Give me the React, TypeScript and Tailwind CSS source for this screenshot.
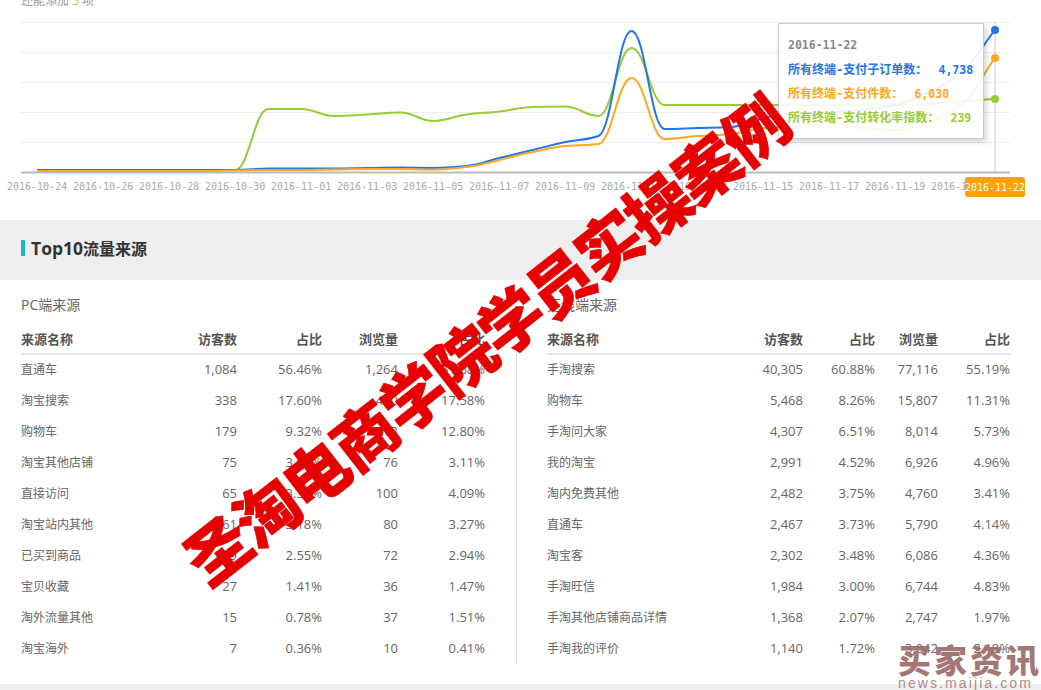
import React from "react";

type Row = [string, string, string, string, string];

const leftRows: Row[] = [
  ["直通车", "1,084", "56.46%", "1,264", "51.68%"],
  ["淘宝搜索", "338", "17.60%", "430", "17.58%"],
  ["购物车", "179", "9.32%", "313", "12.80%"],
  ["淘宝其他店铺", "75", "3.91%", "76", "3.11%"],
  ["直接访问", "65", "3.39%", "100", "4.09%"],
  ["淘宝站内其他", "61", "3.18%", "80", "3.27%"],
  ["已买到商品", "49", "2.55%", "72", "2.94%"],
  ["宝贝收藏", "27", "1.41%", "36", "1.47%"],
  ["淘外流量其他", "15", "0.78%", "37", "1.51%"],
  ["淘宝海外", "7", "0.36%", "10", "0.41%"],
];

const rightRows: Row[] = [
  ["手淘搜索", "40,305", "60.88%", "77,116", "55.19%"],
  ["购物车", "5,468", "8.26%", "15,807", "11.31%"],
  ["手淘问大家", "4,307", "6.51%", "8,014", "5.73%"],
  ["我的淘宝", "2,991", "4.52%", "6,926", "4.96%"],
  ["淘内免费其他", "2,482", "3.75%", "4,760", "3.41%"],
  ["直通车", "2,467", "3.73%", "5,790", "4.14%"],
  ["淘宝客", "2,302", "3.48%", "6,086", "4.36%"],
  ["手淘旺信", "1,984", "3.00%", "6,744", "4.83%"],
  ["手淘其他店铺商品详情", "1,368", "2.07%", "2,747", "1.97%"],
  ["手淘我的评价", "1,140", "1.72%", "3,042", "2.18%"],
];

const labels = [
  "2016-10-24", "2016-10-26", "2016-10-28", "2016-10-30", "2016-11-01", "2016-11-03", "2016-11-05", "2016-11-07",
  "2016-11-09", "2016-11-11", "2016-11-13", "2016-11-15", "2016-11-17", "2016-11-19", "2016-11-21",
];

const xs = Array.from({ length: 30 }, (_, i) => 37 + i * 33.03);

const green = [170, 170, 170, 170, 170, 170, 170, 109, 109, 116, 114.5, 112.5, 121, 114.5, 111.5, 107, 106.5, 116, 48, 105, 105, 105, 105, 105, 105, 105, 105, 104, 101, 99];
const blue = [170, 170, 170, 170, 170, 170, 170, 168.5, 168.5, 168.5, 168, 167.5, 168, 166, 158, 150, 142, 136, 31, 129, 128, 127, 118, 113, 112, 110, 105, 92, 72, 30];
const orange = [171, 171, 171, 171, 171, 171, 170.5, 170, 170, 169.5, 169, 169, 169.5, 167, 160, 152, 146, 144, 78, 139, 136, 134, 128, 126, 123, 128, 130, 122, 104, 58];

function spline(ys: number[]): string {
  const n = ys.length;
  const d: number[] = [];
  for (let i = 0; i < n - 1; i++) d.push((ys[i + 1] - ys[i]) / (xs[i + 1] - xs[i]));
  const m: number[] = [0];
  for (let i = 1; i < n - 1; i++) {
    m.push(d[i - 1] * d[i] <= 0 ? 0 : (2 * d[i - 1] * d[i]) / (d[i - 1] + d[i]));
  }
  m.push(d[n - 2]);
  let p = `M${xs[0]} ${ys[0]}`;
  for (let i = 0; i < n - 1; i++) {
    const h = (xs[i + 1] - xs[i]) / 2.4;
    p += `C${xs[i] + h} ${ys[i] + m[i] * h} ${xs[i + 1] - h} ${ys[i + 1] - m[i + 1] * h} ${xs[i + 1]} ${ys[i + 1]}`;
  }
  return p;
}

function DataTable({ title, rows, widths }: { title: string; rows: Row[]; widths: number[] }) {
  return (
    <div>
      <h3 className="text-[14px] leading-[20px] font-normal text-[#666]">{title}</h3>
      <table className="mt-[15px] table-fixed border-collapse text-[13px]" style={{ width: widths.reduce((a, b) => a + b, 0) }}>
        <colgroup>
          {widths.map((w, i) => (
            <col key={i} style={{ width: w }} />
          ))}
        </colgroup>
        <thead>
          <tr className="h-[24px] border-b-2 border-[#e5e5e5] text-[#555] align-top">
            <th className="text-left font-bold leading-[18px]">来源名称</th>
            <th className="text-right font-bold leading-[18px]">访客数</th>
            <th className="text-right font-bold leading-[18px]">占比</th>
            <th className="text-right font-bold leading-[18px]">浏览量</th>
            <th className="text-right font-bold leading-[18px]">占比</th>
          </tr>
        </thead>
        <tbody>
          {rows.map((r) => (
            <tr key={r[0]} className="h-[31px] text-[#666]">
              <td className="text-left text-[12px] whitespace-nowrap">{r[0]}</td>
              <td className="text-right">{r[1]}</td>
              <td className="text-right">{r[2]}</td>
              <td className="text-right">{r[3]}</td>
              <td className="text-right">{r[4]}</td>
            </tr>
          ))}
        </tbody>
      </table>
    </div>
  );
}

export default function App() {
  return (
    <div className="relative h-[690px] w-[1041px] overflow-hidden bg-white font-['Open_Sans','Noto_Sans_CJK_SC',sans-serif]">
      <section className="relative h-[220px] overflow-hidden">
        <p className="relative -top-[6px] pl-[21px] text-[12px] leading-[14px] text-[#999]">
          还能添加 <span className="text-[#ffa31a]">5</span> 项
        </p>
        <svg className="absolute left-0 top-0" width="1041" height="176" viewBox="0 0 1041 176" fill="none">
          {[22, 52, 82, 112, 142].map((y) => (
            <line key={y} x1="21" x2="1010" y1={y + 0.5} y2={y + 0.5} stroke="#eeeeee" />
          ))}
          <line x1="21" x2="1010" y1="172.5" y2="172.5" stroke="#bbbbbb" strokeWidth="2" />
          <line x1="995" x2="995" y1="22" y2="172" stroke="#cccccc" />
          <path d={spline(green)} stroke="#98cc34" strokeWidth="2" />
          <path d={spline(blue)} stroke="#2176e8" strokeWidth="2" />
          <path d={spline(orange)} stroke="#ffa91f" strokeWidth="2" />
          <circle cx="995" cy="30" r="4" fill="#2176e8" />
          <circle cx="995" cy="58" r="4" fill="#ffa91f" />
          <circle cx="995" cy="99" r="4" fill="#98cc34" />
        </svg>
        <div className="absolute left-[7px] top-[179px] flex font-['DejaVu_Sans_Mono',monospace] text-[10px] leading-[16px] text-[#aaa]">
          {labels.map((l) => (
            <span key={l} className="w-[66px] shrink-0">
              {l}
            </span>
          ))}
        </div>
        <div className="absolute left-[965px] top-[177px] flex h-[20px] w-[60px] items-center justify-center rounded-[3px] bg-[#ffa00f] font-['DejaVu_Sans_Mono',monospace] text-[10px] whitespace-nowrap text-white">
          2016-11-22
        </div>
        <div className="absolute left-[778px] top-[23px] h-[116px] w-[206px] border border-[#ccc] bg-white/90 pl-[9px] pt-[11px] font-['DejaVu_Sans_Mono','Noto_Sans_CJK_SC',monospace] text-[12px] font-bold leading-[24px] shadow-[2px_3px_6px_rgba(0,0,0,0.18)]">
          <div className="text-[#888] text-[11.5px] leading-[20px]">2016-11-22</div>
          <div className="mt-[3px] text-[#2176e8] whitespace-nowrap">
            所有终端-支付子订单数： <span className="ml-[4px] text-[11.5px]">4,738</span>
          </div>
          <div className="text-[#ffa91f] whitespace-nowrap">
            所有终端-支付件数： <span className="ml-[4px] text-[11.5px]">6,030</span>
          </div>
          <div className="text-[#98cc34] whitespace-nowrap">
            所有终端-支付转化率指数： <span className="ml-[4px] text-[11.5px]">239</span>
          </div>
        </div>
      </section>

      <div className="flex h-[60px] items-center bg-[#eeeeee] pb-[4px] pl-[21px]">
        <span className="h-[16px] w-[4px] bg-[#1fb1c4]" />
        <h2 className="ml-[6px] text-[16px] font-bold text-[#333]">
          <span className="text-[17.5px]">Top10</span>流量来源
        </h2>
      </div>

      <div className="flex pl-[21px] pt-[15px]">
        <DataTable title="PC端来源" rows={leftRows} widths={[130, 86, 85, 76, 87]} />
        <div className="ml-[31px] mt-[58px] h-[311px] w-px bg-[#ddd]" />
        <div className="ml-[30px]">
          <DataTable title="无线端来源" rows={rightRows} widths={[170, 86, 72, 63, 72]} />
        </div>
      </div>

      <div className="absolute bottom-0 left-0 h-[6px] w-full bg-[#eeeeee]" />

      <div className="absolute left-[484px] top-[338px] -translate-x-1/2 -translate-y-1/2 -rotate-[38deg] whitespace-nowrap font-['Noto_Sans_CJK_SC',sans-serif] text-[64px] font-black leading-none tracking-[-2px] text-[#e60000] [-webkit-text-stroke:0.6px_#e60000]">
        圣淘电商学院学员实操案例
      </div>

      <div className="absolute left-[898px] top-[642px] flex w-[143px] flex-col items-start text-[#a06f6f]">
        <span className="whitespace-nowrap font-['Noto_Sans_CJK_SC',sans-serif] text-[33px] font-black leading-[34px] tracking-[3px] opacity-95">买家资讯</span>
        <span className="whitespace-nowrap font-['Liberation_Sans',sans-serif] text-[14px] leading-[14px] tracking-[2.1px] opacity-80">news.maijia.com</span>
      </div>
    </div>
  );
}
